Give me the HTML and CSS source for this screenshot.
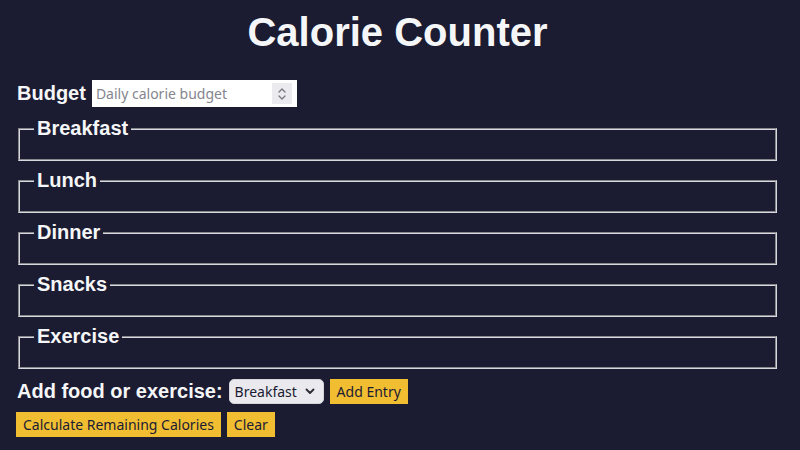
FILE: index.html
```html
<!DOCTYPE html>
<html lang="en">
<head>
<meta charset="utf-8">
<title>Calorie Counter</title>
<link rel="stylesheet" href="styles.css">
</head>
<body>
<main class="container">
  <h1 class="title">Calorie Counter</h1>
  <form class="form">
    <div class="budget-row">
      <label class="label" for="budget">Budget</label>
      <span class="number-wrap">
        <input class="budget-input" type="number" id="budget" placeholder="Daily calorie budget">
        <span class="spinner" aria-hidden="true">
          <svg width="10" height="16" viewBox="0 0 10 16"><path d="M2 6 L5 3 L8 6 M2 10 L5 13 L8 10" fill="none" stroke="#77777f" stroke-width="1.3" stroke-linecap="round" stroke-linejoin="round"/></svg>
        </span>
      </span>
    </div>
    <fieldset class="meal"><legend class="legend">Breakfast</legend><div class="entries"></div></fieldset>
    <fieldset class="meal"><legend class="legend">Lunch</legend><div class="entries"></div></fieldset>
    <fieldset class="meal"><legend class="legend">Dinner</legend><div class="entries"></div></fieldset>
    <fieldset class="meal"><legend class="legend">Snacks</legend><div class="entries"></div></fieldset>
    <fieldset class="meal"><legend class="legend">Exercise</legend><div class="entries"></div></fieldset>
    <div class="add-row">
      <label class="label" for="entry-dropdown">Add food or exercise:</label>
      <span class="select-wrap">
        <select class="dropdown" id="entry-dropdown">
          <option>Breakfast</option>
          <option>Lunch</option>
          <option>Dinner</option>
          <option>Snacks</option>
          <option>Exercise</option>
        </select>
        <svg class="chevron" width="10" height="7" viewBox="0 0 10 7" aria-hidden="true"><path d="M1.5 1.5 L5 5 L8.5 1.5" fill="none" stroke="#2a2a33" stroke-width="1.8" stroke-linecap="round" stroke-linejoin="round"/></svg>
      </span>
      <button class="btn" type="button">Add Entry</button>
    </div>
    <div class="action-row">
      <button class="btn" type="button">Calculate Remaining Calories</button>
      <button class="btn" type="button">Clear</button>
    </div>
  </form>
</main>
</body>
</html>
```

FILE: styles.css
```css
html, body {
  margin: 0;
  padding: 0;
}
body {
  background-color: #1b1b32;
  color: #f5f6f7;
  font-family: "Liberation Sans", Arial, sans-serif;
}
.container {
  padding: 9px 21px 0 16px;
}
.title {
  margin: 0;
  font-size: 40px;
  line-height: 46px;
  text-align: center;
  font-weight: bold;
}
.form {
  display: flex;
  flex-direction: column;
  margin-top: 25px;
}
.label {
  font-weight: bold;
  font-size: 20px;
}
.budget-row {
  display: flex;
  align-items: center;
  gap: 6px;
  margin-left: 1px;
}
.number-wrap {
  position: relative;
  display: inline-block;
}
.budget-input {
  width: 205px;
  height: 27px;
  box-sizing: border-box;
  border: 1px solid #ffffff;
  background: #ffffff;
  padding: 0 28px 0 3px;
  font-family: "Noto Sans", sans-serif;
  font-size: 14px;
  color: #1b1b32;
  display: block;
}
.budget-input::placeholder {
  color: #85858f;
}
.budget-input::-webkit-inner-spin-button,
.budget-input::-webkit-outer-spin-button {
  -webkit-appearance: none;
  margin: 0;
}
.spinner {
  position: absolute;
  right: 5px;
  top: 3px;
  width: 20px;
  height: 21px;
  background: #ebebef;
  display: flex;
  align-items: center;
  justify-content: center;
}
.meal {
  margin: 8px 2px 0 2px;
  border: 2px groove #d8d8e0;
  padding: 5px 14px 14px 14px;
  min-height: 0;
}
.meal:first-of-type {
  margin-top: 10px;
}
.legend {
  font-weight: bold;
  font-size: 20px;
  padding: 0 3px;
}
.add-row {
  display: flex;
  align-items: center;
  gap: 6px;
  margin-top: 10px;
  margin-left: 1px;
}
.select-wrap {
  position: relative;
  display: inline-block;
}
.dropdown {
  -webkit-appearance: none;
  appearance: none;
  display: block;
  height: 25px;
  width: 95px;
  box-sizing: border-box;
  background: #e9e9ee;
  border: 1px solid #d4d4dc;
  border-radius: 5px;
  padding: 0 20px 0 5px;
  font-family: "Noto Sans", sans-serif;
  font-size: 14px;
  color: #1b1b32;
}
.chevron {
  position: absolute;
  right: 9px;
  top: 9px;
  pointer-events: none;
}
.action-row {
  display: flex;
  gap: 6px;
  margin-top: 8px;
}
.btn {
  background-color: #f1be32;
  border: 2px solid #f1be32;
  cursor: pointer;
  font-family: "Noto Sans", sans-serif;
  font-size: 14px;
  color: #1b1b32;
  padding: 1px 5px;
  line-height: 19px;
}
```
